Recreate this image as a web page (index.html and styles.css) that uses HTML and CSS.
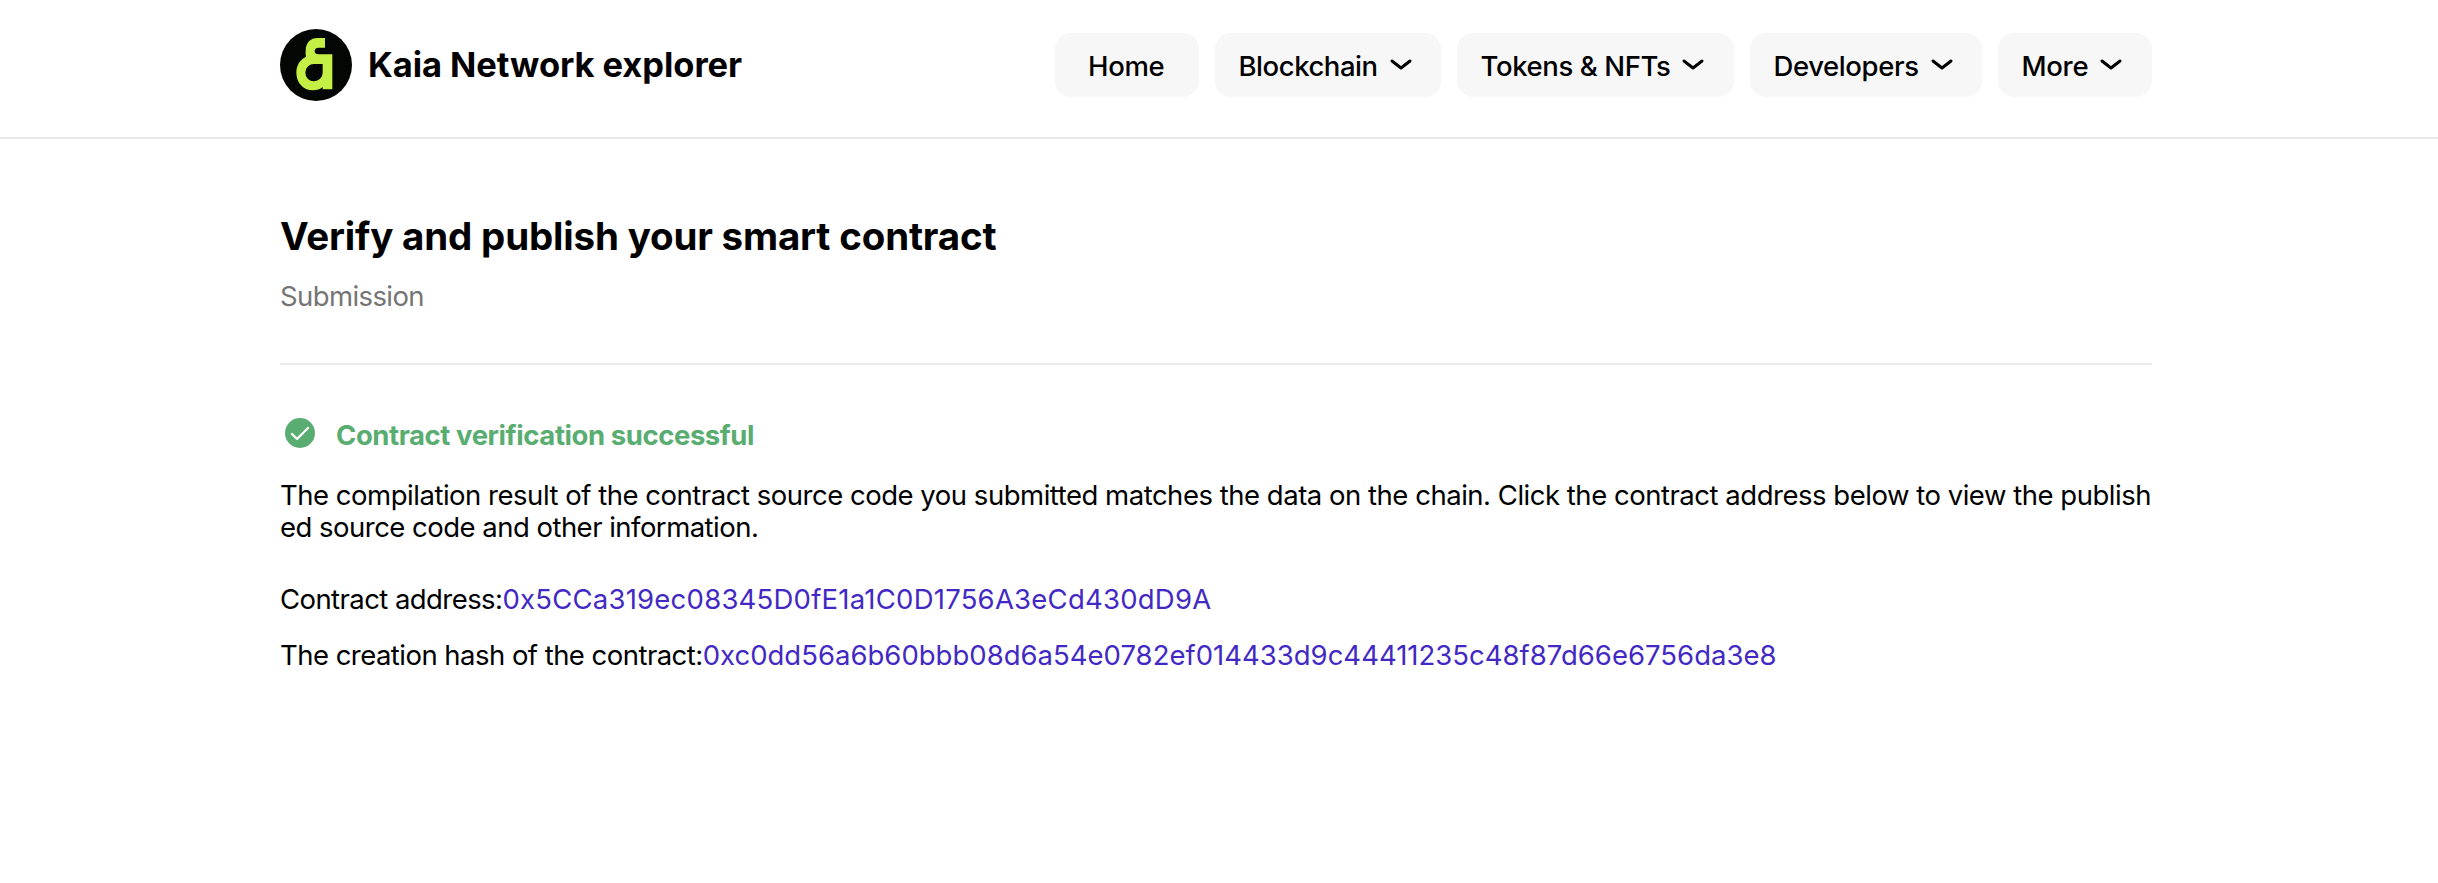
FILE: index.html
```html
<!DOCTYPE html>
<html lang="en">
<head>
<meta charset="utf-8">
<title>Kaia Network explorer</title>
<link rel="stylesheet" href="styles.css">
</head>
<body>
<header class="header">
  <div class="container header-row">
    <a class="brand">
      <svg class="logo" viewBox="30 27 216 216"><circle cx="138" cy="135" r="108" fill="#040604"/><path fill="#c4f045" fill-rule="evenodd" d="M165 54V83H146Q134 84 134 93Q134 103 146 103H187V208H158V201Q147 211 129 211C98 211 79 188 79 157C79 136 90 119 108 110Q106 104 107 93C107 68 121 54 143 54ZM158 132H133A26 26 0 1 0 158 158Z"/></svg>
      <span class="brand-name">Kaia Network explorer</span>
    </a>
    <nav class="nav">
      <a class="pill pill-home"><span class="label l-home">Home</span></a>
      <a class="pill pill-block"><span class="label l-block">Blockchain</span><svg class="chev" viewBox="0 0 24 14"><path d="M3 3L12 10L21 3"/></svg></a>
      <a class="pill pill-tokens"><span class="label l-tokens">Tokens &amp; NFTs</span><svg class="chev" viewBox="0 0 24 14"><path d="M3 3L12 10L21 3"/></svg></a>
      <a class="pill pill-dev"><span class="label l-dev">Developers</span><svg class="chev" viewBox="0 0 24 14"><path d="M3 3L12 10L21 3"/></svg></a>
      <a class="pill pill-more"><span class="label l-more">More</span><svg class="chev" viewBox="0 0 24 14"><path d="M3 3L12 10L21 3"/></svg></a>
    </nav>
  </div>
</header>
<main class="container">
  <h1 class="title">Verify and publish your smart contract</h1>
  <p class="subtitle">Submission</p>
  <div class="status">
    <svg class="check" viewBox="0 0 30 30"><circle cx="15" cy="15" r="15" fill="#59ad71"/><path d="M7 16L12 21L23 10" fill="none" stroke="#fff" stroke-width="2.4" stroke-linecap="round" stroke-linejoin="round"/></svg>
    <span class="status-text">Contract verification successful</span>
  </div>
  <p class="desc"><span class="d1">The compilation result of the contract source code you submitted matches the data on the chain. Click the contract address below to view the publish</span><br><span class="d2">ed source code and other information.</span></p>
  <p class="row"><span class="k1">Contract address:</span><a class="link a1">0x5CCa319ec08345D0fE1a1C0D1756A3eCd430dD9A</a></p>
  <p class="row"><span class="k2">The creation hash of the contract:</span><a class="link a2">0xc0dd56a6b60bbb08d6a54e0782ef014433d9c44411235c48f87d66e6756da3e8</a></p>
</main>
</body>
</html>
```
FILE: styles.css
```css
* { box-sizing: border-box; margin: 0; padding: 0; }
body { background: #fff; color: #000; font-family: Inter, "Liberation Sans", sans-serif; font-size: 27.5px; line-height: 32px; }
.container { width: 1872px; margin-left: 280px; }
.header { height: 139px; border-bottom: 2px solid #eaeaea; padding-top: 29px; }
.header-row { display: flex; justify-content: space-between; align-items: flex-start; }
.brand { display: flex; align-items: center; gap: 16px; }
.logo { width: 72px; height: 72px; display: block; }
.brand-name { font-size: 34.5px; font-weight: 700; letter-spacing: -0.06px; white-space: nowrap; }
.nav { display: flex; gap: 16px; padding-top: 4px; }
.pill { height: 64px; border-radius: 16px; background: #f7f7f7; display: flex; align-items: center; padding-left: 23.5px; font-weight: 500; white-space: nowrap; }
.label { padding-top: 1px; }
.l-home { letter-spacing: -0.3px; }
.l-block { letter-spacing: -0.46px; }
.l-tokens { letter-spacing: -0.39px; }
.l-dev { letter-spacing: -0.4px; }
.l-more { letter-spacing: -0.3px; }
.pill-home { width: 144px; padding-left: 33px; }
.pill-block { width: 226px; }
.pill-tokens { width: 277px; }
.pill-dev { width: 232px; }
.pill-more { width: 154px; }
.chev { width: 24px; height: 14px; margin-left: 11px; fill: none; stroke: #000; stroke-width: 3; stroke-linecap: round; stroke-linejoin: round; }
.title { font-size: 38.5px; line-height: 48px; margin-top: 73px; font-weight: 700; letter-spacing: -0.18px; white-space: nowrap; }
.subtitle { color: #757575; margin-top: 20px; padding-bottom: 51px; border-bottom: 2px solid #eaeaea; letter-spacing: -0.6px; }
.status { display: flex; align-items: center; gap: 21px; margin-top: 53px; padding-left: 5px; height: 30px; color: #59ad71; font-weight: 700; }
.check { width: 30px; height: 30px; }
.status-text { padding-top: 3px; letter-spacing: -0.43px; }
.desc { margin-top: 31px; white-space: nowrap; }
.d1 { letter-spacing: -0.48px; }
.d2 { letter-spacing: -0.52px; }
.row { margin-top: 24px; white-space: nowrap; }
.desc + .row { margin-top: 40px; }
.k1 { letter-spacing: -0.57px; }
.k2 { letter-spacing: -0.533px; }
.a1 { letter-spacing: 0.229px; }
.a2 { letter-spacing: 0.01px; }
.link { color: #4329c4; }
```
